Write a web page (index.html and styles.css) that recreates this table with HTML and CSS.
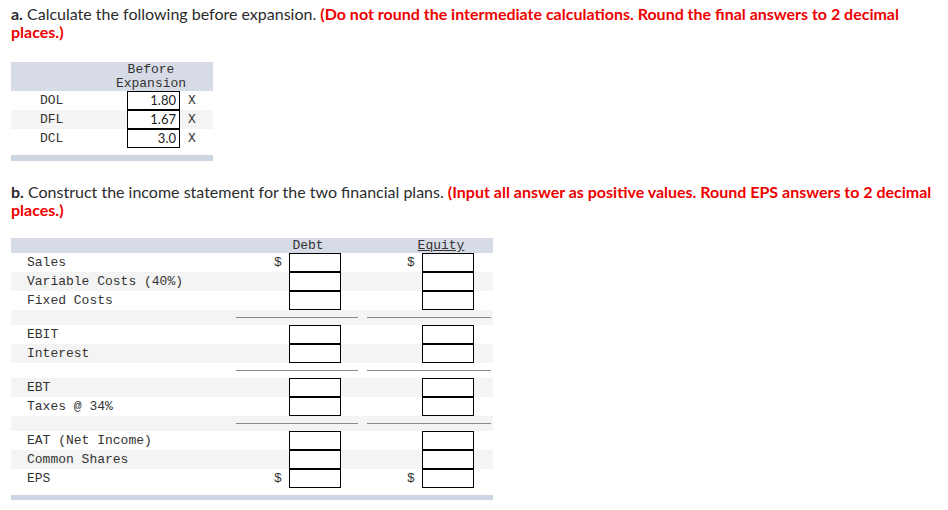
FILE: index.html
```html
<!DOCTYPE html>
<html>
<head>
<meta charset="utf-8">
<link rel="stylesheet" href="styles.css">
</head>
<body>
<p class="q q-a"><b>a.</b> Calculate the following before expansion. <span class="red">(Do not round the intermediate calculations. Round the final answers to 2 decimal places.)</span></p>

<div class="ta">
  <div class="ta-head"><div class="ta-sp"></div><div class="ta-h">Before<br>Expansion</div></div>
  <div class="ta-row"><div class="ta-lab">DOL</div><div class="box val">1.80</div><div class="ta-x">X</div></div>
  <div class="ta-row alt"><div class="ta-lab">DFL</div><div class="box val">1.67</div><div class="ta-x">X</div></div>
  <div class="ta-row"><div class="ta-lab">DCL</div><div class="box val">3.0</div><div class="ta-x">X</div></div>
  <div class="ta-gap"></div>
  <div class="foot"></div>
</div>

<p class="q q-b"><b>b.</b> Construct the income statement for the two financial plans. <span class="red">(Input all answer as positive values. Round EPS answers to 2 decimal places.)</span></p>

<div class="tb">
  <div class="tb-head"><div class="tb-lab"></div><div class="grp hd">Debt</div><div class="mid"></div><div class="grp hd"><u>Equity</u></div></div>
  <div class="tb-row"><div class="tb-lab">Sales</div><div class="grp"><span class="cur">$</span><div class="box"></div></div><div class="mid"></div><div class="grp"><span class="cur">$</span><div class="box"></div></div></div>
  <div class="tb-row alt"><div class="tb-lab">Variable Costs (40%)</div><div class="grp"><span class="cur"></span><div class="box"></div></div><div class="mid"></div><div class="grp"><span class="cur"></span><div class="box"></div></div></div>
  <div class="tb-row"><div class="tb-lab">Fixed Costs</div><div class="grp"><span class="cur"></span><div class="box"></div></div><div class="mid"></div><div class="grp"><span class="cur"></span><div class="box"></div></div></div>
  <div class="tb-sep alt"><div class="sep-sp"></div><div class="line l1"></div><div class="line l2"></div></div>
  <div class="tb-row"><div class="tb-lab">EBIT</div><div class="grp"><span class="cur"></span><div class="box"></div></div><div class="mid"></div><div class="grp"><span class="cur"></span><div class="box"></div></div></div>
  <div class="tb-row alt"><div class="tb-lab">Interest</div><div class="grp"><span class="cur"></span><div class="box"></div></div><div class="mid"></div><div class="grp"><span class="cur"></span><div class="box"></div></div></div>
  <div class="tb-sep"><div class="sep-sp"></div><div class="line l1"></div><div class="line l2"></div></div>
  <div class="tb-row alt"><div class="tb-lab">EBT</div><div class="grp"><span class="cur"></span><div class="box"></div></div><div class="mid"></div><div class="grp"><span class="cur"></span><div class="box"></div></div></div>
  <div class="tb-row"><div class="tb-lab">Taxes @ 34%</div><div class="grp"><span class="cur"></span><div class="box"></div></div><div class="mid"></div><div class="grp"><span class="cur"></span><div class="box"></div></div></div>
  <div class="tb-sep alt"><div class="sep-sp"></div><div class="line l1"></div><div class="line l2"></div></div>
  <div class="tb-row"><div class="tb-lab">EAT (Net Income)</div><div class="grp"><span class="cur"></span><div class="box"></div></div><div class="mid"></div><div class="grp"><span class="cur"></span><div class="box"></div></div></div>
  <div class="tb-row alt"><div class="tb-lab">Common Shares</div><div class="grp"><span class="cur"></span><div class="box"></div></div><div class="mid"></div><div class="grp"><span class="cur"></span><div class="box"></div></div></div>
  <div class="tb-row"><div class="tb-lab">EPS</div><div class="grp"><span class="cur">$</span><div class="box"></div></div><div class="mid"></div><div class="grp"><span class="cur">$</span><div class="box"></div></div></div>
  <div class="tb-gap"></div>
  <div class="foot"></div>
</div>
</body>
</html>
```
FILE: styles.css
```css
* { box-sizing: border-box; }
body {
  margin: 0;
  padding: 0 0 0 11px;
  background: #fff;
  color: #333;
  font-family: Lato, "Liberation Sans", sans-serif;
}
.q {
  margin: 0;
  font-size: 16px;
  line-height: 18px;
  color: #2b2b2b;
}
.q b { font-weight: 700; }
.red { color: #ee0000; font-weight: 700; }
.q-a { padding-top: 5px; }
.q-b { margin-top: 22px; }

.ta, .tb {
  font-family: "Liberation Mono", "DejaVu Sans Mono", monospace;
  font-size: 13px;
  color: #333;
}

.box {
  width: 53px;
  height: 19px;
  border: 1px solid #000;
  background: #fff;
  flex: none;
}
.val {
  font-family: Lato, "Liberation Sans", sans-serif;
  font-size: 13px;
  line-height: 17px;
  text-align: right;
  padding-right: 3px;
  color: #222;
}

/* table a */
.ta { width: 202px; margin-top: 21px; }
.ta-head {
  display: flex;
  height: 29px;
  background: #d6dbe5;
}
.ta-sp { width: 100px; }
.ta-h {
  width: 80px;
  text-align: center;
  line-height: 14px;
  padding-top: 1px;
}
.ta-row {
  display: flex;
  align-items: center;
  height: 19px;
}
.alt { background: #f4f4f4; }
.ta-lab { width: 116px; padding-left: 29px; }
.ta-x { padding-left: 8px; }
.ta-gap { height: 7px; }
.foot { height: 6px; background: #ccd5e1; }

/* table b */
.tb { width: 482px; margin-top: 19px; }
.tb-head {
  display: flex;
  height: 15px;
  background: #d6dbe5;
  line-height: 14px;
}
.tb-head .hd { justify-content: center; padding-top: 1px; }
.tb-row {
  display: flex;
  align-items: center;
  height: 19px;
}
.tb-lab { width: 263px; padding-left: 16px; white-space: pre; }
.grp { width: 68px; display: flex; align-items: center; }
.cur { width: 15px; flex: none; }
.grp .box { width: 52px; }
.mid { width: 65px; }
.tb-sep {
  display: flex;
  height: 15px;
  align-items: center;
}
.sep-sp { width: 225px; }
.line { height: 1px; background: #888; }
.l1 { width: 122px; }
.l2 { width: 124px; margin-left: 9px; }
.tb-gap { height: 7px; }
.tb .foot { height: 5px; }
```
